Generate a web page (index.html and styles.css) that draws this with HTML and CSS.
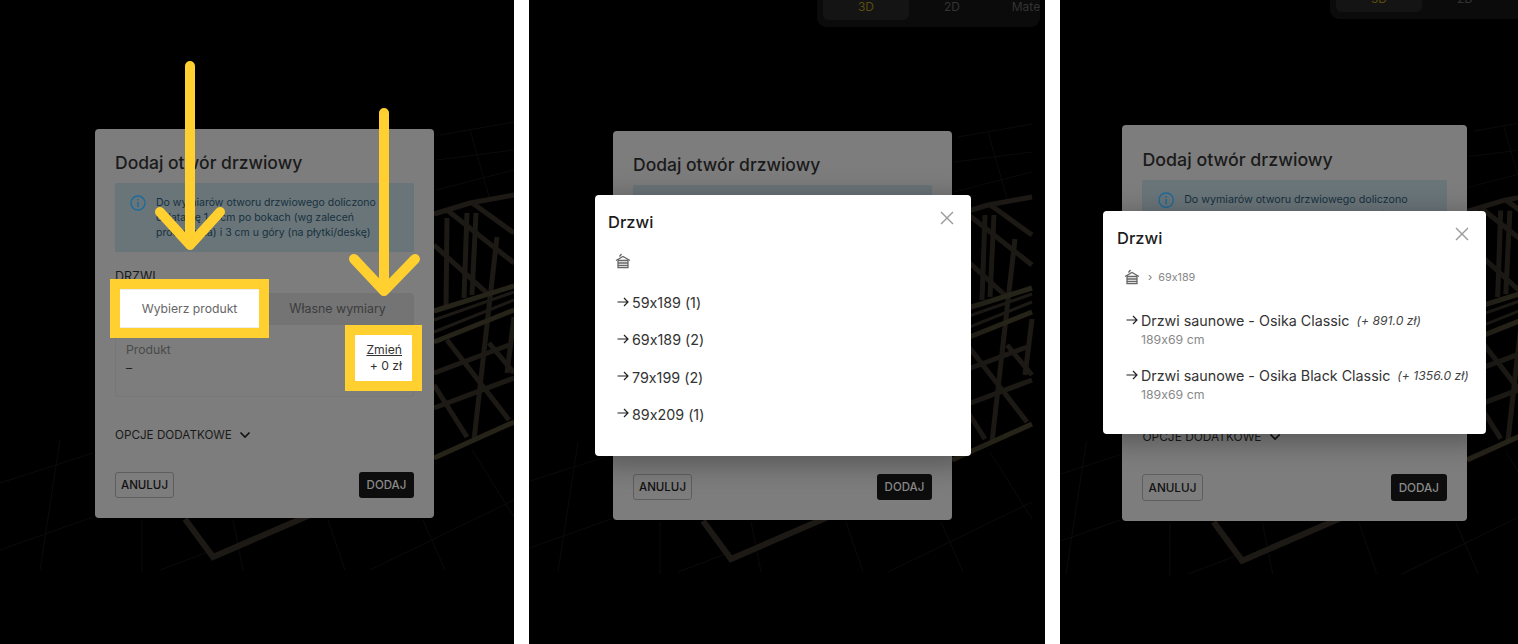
FILE: index.html
```html
<!DOCTYPE html>
<html lang="pl">
<head>
    <meta charset="UTF-8">
    <meta name="viewport" content="width=device-width, initial-scale=1.0">
    <title>Dodaj otwór drzwiowy</title>
    <link rel="stylesheet" href="styles.css">
</head>
<body>

<svg class="defs" width="0" height="0">
    <defs>
        <g id="scene" fill="none">
            <!-- floor grid -->
            <g stroke="#0b0b0b" stroke-width="1">
                <path d="M0 483L93 453M0 550L93 517M60 440L40 570M142 520V572M160 570L213 550M233 520L243 570M328 520L345 570M370 570L514 500M423 520L445 570M472 450L514 517"/>
                <path d="M436 190L514 170M436 160L514 150M440 135L514 122M470 130L490 200"/>
            </g>
            <!-- sauna frame -->
            <g stroke="#1d1a16" stroke-width="5">
                <path d="M434 214L470 203L514 195M447 210L514 263M471 202L514 233M434 245L489 295"/>
                <path d="M447 218L446 307M467 213L464 298M476 213L472 295M497 237L489 307M489 307L474 440M514 317L507 373"/>
                <path d="M434 373L509 345M434 408L514 378M447 340L509 420M434 385L467 437M489 343L514 373"/>
                <path d="M434 320L514 292M434 332L514 300" stroke-width="3"/>
                <path d="M185 519L213 557L310 515" stroke-width="6"/>
            </g>
            <g stroke="#262319" stroke-width="5">
                <path d="M434 311L514 286M434 342L514 310M434 458L514 422"/>
            </g>
        </g>
        <symbol id="home" viewBox="0 0 16 16">
            <path d="M1 7.5L8 3.5L15 7.5M3 7.5V14.5H13V7.5M3 7.5H13M3 10H13M3 12.3H13M4.5 3.5L6.5 1" fill="none" stroke="#666" stroke-width="1.3"/>
        </symbol>
        <symbol id="arrow" viewBox="0 0 12 12">
            <path d="M0.5 6H11M7 2L11 6L7 10" fill="none" stroke="#222" stroke-width="1.2"/>
        </symbol>
        <symbol id="close" viewBox="0 0 14 14">
            <path d="M1 1L13 13M13 1L1 13" fill="none" stroke="#999" stroke-width="1.4"/>
        </symbol>
        <symbol id="info" viewBox="0 0 16 16">
            <circle cx="8" cy="8" r="7" fill="none" stroke="#1c6b9b" stroke-width="1.4"/>
            <path d="M8 7V12M8 4V5.6" fill="none" stroke="#1c6b9b" stroke-width="1.5"/>
        </symbol>
        <symbol id="chevron" viewBox="0 0 12 8">
            <path d="M1.5 1.5L6 6L10.5 1.5" fill="none" stroke="#111" stroke-width="1.6"/>
        </symbol>
    </defs>
</svg>

<div class="screen screen-one">
    <svg class="scene" width="514" height="644"><use href="#scene"/></svg>

    <div class="dialog">
        <h2 class="dialog-title">Dodaj otwór drzwiowy</h2>
        <div class="info-box">
            <svg class="info-icon"><use href="#info"/></svg>
            <p>Do wymiarów otworu drzwiowego doliczono dylatację 1,5 cm po bokach (wg zaleceń producenta) i 3 cm u góry (na płytki/deskę)</p>
        </div>
        <div class="section-label">DRZWI</div>
        <div class="tabs">
            <div class="tab tab-active marked">Wybierz produkt</div>
            <div class="tab">Własne wymiary</div>
        </div>
        <div class="product-box">
            <div>
                <div class="product-label">Produkt</div>
                <div class="product-value">–</div>
            </div>
            <div class="product-price marked">
                <a class="change-link">Zmień</a>
                <div>+ 0 zł</div>
            </div>
        </div>
        <div class="more-options">OPCJE DODATKOWE <svg class="chevron"><use href="#chevron"/></svg></div>
        <div class="dialog-actions">
            <button class="btn btn-outline">ANULUJ</button>
            <button class="btn btn-dark">DODAJ</button>
        </div>
    </div>

    <svg class="arrows" width="514" height="644">
        <path d="M190 66V245M160 212L190 245L220 212"/>
        <path d="M384 113V291M354 259L384 291L415 259"/>
    </svg>
</div>

<div class="screen screen-two">
    <svg class="scene" width="508" height="644"><use href="#scene" transform="translate(-11 2)"/></svg>

    <div class="view-switch">
        <div class="view-tab view-tab-active">3D</div>
        <div class="view-tab">2D</div>
        <div class="view-tab">Materiały</div>
    </div>

    <div class="dialog">
        <h2 class="dialog-title">Dodaj otwór drzwiowy</h2>
        <div class="info-box">
            <svg class="info-icon"><use href="#info"/></svg>
            <p>Do wymiarów otworu drzwiowego doliczono dylatację 1,5 cm po bokach (wg zaleceń producenta) i 3 cm u góry (na płytki/deskę)</p>
        </div>
        <div class="section-label">DRZWI</div>
        <div class="tabs">
            <div class="tab tab-active">Wybierz produkt</div>
            <div class="tab">Własne wymiary</div>
        </div>
        <div class="product-box">
            <div>
                <div class="product-label">Produkt</div>
                <div class="product-value">–</div>
            </div>
            <div class="product-price">
                <a class="change-link">Zmień</a>
                <div>+ 0 zł</div>
            </div>
        </div>
        <div class="more-options">OPCJE DODATKOWE <svg class="chevron"><use href="#chevron"/></svg></div>
        <div class="dialog-actions">
            <button class="btn btn-outline">ANULUJ</button>
            <button class="btn btn-dark">DODAJ</button>
        </div>
    </div>

    <div class="modal">
        <div class="modal-head">
            <h3>Drzwi</h3>
            <svg class="close-icon"><use href="#close"/></svg>
        </div>
        <div class="crumbs">
            <svg class="home-icon"><use href="#home"/></svg>
        </div>
        <div class="pick-list">
            <div class="pick-row"><svg class="arrow-icon"><use href="#arrow"/></svg>59x189 (1)</div>
            <div class="pick-row"><svg class="arrow-icon"><use href="#arrow"/></svg>69x189 (2)</div>
            <div class="pick-row"><svg class="arrow-icon"><use href="#arrow"/></svg>79x199 (2)</div>
            <div class="pick-row"><svg class="arrow-icon"><use href="#arrow"/></svg>89x209 (1)</div>
        </div>
    </div>
</div>

<div class="screen screen-three">
    <svg class="scene" width="458" height="644"><use href="#scene" transform="translate(-34.7 -6.3) scale(1.018)"/></svg>

    <div class="view-switch">
        <div class="view-tab view-tab-active">3D</div>
        <div class="view-tab">2D</div>
        <div class="view-tab">Materiały</div>
    </div>

    <div class="dialog">
        <h2 class="dialog-title">Dodaj otwór drzwiowy</h2>
        <div class="info-box">
            <svg class="info-icon"><use href="#info"/></svg>
            <p>Do wymiarów otworu drzwiowego doliczono dylatację 1,5 cm po bokach (wg zaleceń producenta) i 3 cm u góry (na płytki/deskę)</p>
        </div>
        <div class="section-label">DRZWI</div>
        <div class="tabs">
            <div class="tab tab-active">Wybierz produkt</div>
            <div class="tab">Własne wymiary</div>
        </div>
        <div class="product-box">
            <div>
                <div class="product-label">Produkt</div>
                <div class="product-value">–</div>
            </div>
            <div class="product-price">
                <a class="change-link">Zmień</a>
                <div>+ 0 zł</div>
            </div>
        </div>
        <div class="more-options">OPCJE DODATKOWE <svg class="chevron"><use href="#chevron"/></svg></div>
        <div class="dialog-actions">
            <button class="btn btn-outline">ANULUJ</button>
            <button class="btn btn-dark">DODAJ</button>
        </div>
    </div>

    <div class="modal">
        <div class="modal-head">
            <h3>Drzwi</h3>
            <svg class="close-icon"><use href="#close"/></svg>
        </div>
        <div class="crumbs">
            <svg class="home-icon"><use href="#home"/></svg>
            <span class="crumb-sep">›</span>
            <span class="crumb-text">69x189</span>
        </div>
        <div class="pick-list pick-list-products">
            <div>
                <div class="pick-row"><svg class="arrow-icon"><use href="#arrow"/></svg>Drzwi saunowe - Osika Classic <em>(+ 891.0 zł)</em></div>
                <div class="pick-sub">189x69 cm</div>
            </div>
            <div>
                <div class="pick-row"><svg class="arrow-icon"><use href="#arrow"/></svg>Drzwi saunowe - Osika Black Classic <em>(+ 1356.0 zł)</em></div>
                <div class="pick-sub">189x69 cm</div>
            </div>
        </div>
    </div>
</div>

</body>
</html>
```

FILE: styles.css
```css
* {
    box-sizing: border-box;
}
body {
    font-family: Inter, "Noto Sans", sans-serif;
    font-feature-settings: "calt" 0;
    margin: 0;
    background-color: #fff;
    display: flex;
    gap: 15px;
    height: 644px;
    overflow: hidden;
}
.defs {
    position: absolute;
}
.screen {
    position: relative;
    height: 644px;
    background-color: #000;
    overflow: hidden;
    flex: none;
}
.screen-one {
    width: 514px;
}
.screen-two {
    width: 516px;
}
.screen-three {
    width: 458px;
}
.scene {
    position: absolute;
    left: 0;
    top: 0;
}

/* dimmed dialog */
.dialog {
    position: absolute;
    width: 339px;
    height: 389px;
    padding: 22px 20px 20px;
    background-color: #7d7d7d;
    border-radius: 4px;
    color: #111;
}
.screen-one .dialog {
    left: 95px;
    top: 129px;
}
.screen-two .dialog {
    left: 84px;
    top: 131px;
}
.screen-three .dialog {
    left: 61px;
    top: 123px;
    zoom: 1.018;
}
.dialog-title {
    margin: 0;
    font-size: 17.5px;
    font-weight: 500;
    line-height: 24px;
    color: #1a1a1a;
}
.info-box {
    display: flex;
    gap: 10px;
    height: 69px;
    margin-top: 8px;
    padding: 12px 14px 0 15px;
    background-color: #6a7579;
    border-radius: 2px;
}
.info-box p {
    margin: 0;
    font-size: 10.5px;
    line-height: 15px;
    color: #16303e;
}
.info-icon {
    flex: none;
    width: 16px;
    height: 16px;
}
.section-label {
    margin-top: 17px;
    font-size: 12.5px;
    line-height: 16px;
    color: #1a1a1a;
}
.tabs {
    display: flex;
    height: 32px;
    margin-top: 8px;
    background-color: #747474;
    border-radius: 4px 4px 0 0;
}
.tab {
    flex: 1;
    font-size: 12.4px;
    line-height: 32px;
    text-align: center;
    color: #3c3c3c;
}
.tab:last-child {
    padding-right: 3px;
}
.tab-active {
    background-color: #7d7d7d;
    color: #3c3c3c;
}
.marked {
    position: relative;
    background-color: #fff;
    box-shadow: 0 0 0 10px #ffd02f;
}
.tab.marked {
    flex: none;
    width: 139px;
    margin: -4px 5px -3px;
    font-size: 12.2px;
    line-height: 37px;
    border-top: 1px solid #eee;
    border-bottom: 1px solid #eee;
    color: #666;
}
.product-box {
    display: flex;
    justify-content: space-between;
    height: 72px;
    padding: 17px 11px 0 10px;
    border: 1px solid #777;
    border-top: 0;
    border-radius: 0 0 4px 4px;
    font-size: 12.2px;
    line-height: 16px;
}
.product-label {
    color: #4a4a4a;
}
.product-value {
    margin-top: 2px;
    color: #222;
}
.product-price {
    text-align: right;
    color: #222;
}
.product-price.marked {
    margin: -7px -10px 0 0;
    padding: 7px 10px 7px 11px;
    height: 46px;
    color: #333;
}
.change-link {
    text-decoration: underline;
}
.more-options {
    display: flex;
    align-items: center;
    gap: 7px;
    margin-top: 30px;
    font-size: 11.7px;
    line-height: 16px;
    color: #1a1a1a;
}
.chevron {
    width: 12px;
    height: 8px;
}
.dialog-actions {
    display: flex;
    justify-content: space-between;
    margin-top: 29px;
}
.btn {
    height: 26px;
    padding: 0;
    font-family: inherit;
    font-size: 11.5px;
    font-weight: 500;
    border-radius: 3px;
}
.btn-outline {
    width: 59px;
    background: transparent;
    border: 1px solid #5e5e5e;
    color: #111;
}
.btn-dark {
    width: 55px;
    background-color: #0d0d0d;
    border: 0;
    color: #8a8a8a;
}

/* picker on top */
.modal {
    position: absolute;
    padding: 15px 17px 0 13px;
    background-color: #fff;
    border-radius: 4px;
    box-shadow: 0 6px 30px rgba(0, 0, 0, 0.35);
    color: #222;
}
.screen-two .modal {
    left: 66px;
    top: 195px;
    width: 376px;
    height: 261px;
}
.screen-three .modal {
    left: 43px;
    top: 211px;
    width: 383px;
    height: 223px;
    padding-left: 14px;
}
.modal-head {
    display: flex;
    justify-content: space-between;
    align-items: flex-start;
}
.modal-head h3 {
    margin: 0;
    font-size: 16.5px;
    font-weight: 500;
    line-height: 24px;
    color: #1c1c1c;
}
.close-icon {
    width: 14px;
    height: 14px;
    margin-top: 1px;
}
.crumbs {
    display: flex;
    align-items: center;
    height: 16px;
    margin: 19px 0 0 7px;
}
.home-icon {
    width: 16px;
    height: 16px;
}
.crumb-sep {
    margin-left: 8px;
    font-size: 11px;
    color: #777;
}
.crumb-text {
    margin-left: 6px;
    font-size: 10.8px;
    color: #888;
}
.pick-list {
    display: flex;
    flex-direction: column;
    gap: 17.3px;
    margin: 24px 0 0 9px;
}
.pick-list-products {
    gap: 18px;
    margin-top: 26px;
}
.pick-row {
    display: flex;
    align-items: center;
    gap: 3px;
    font-size: 14.3px;
    line-height: 20px;
    color: #333;
    white-space: pre;
}
.pick-row em {
    font-size: 12.2px;
    color: #444;
}
.arrow-icon {
    flex: none;
    width: 12px;
    height: 12px;
    margin-top: -3px;
}
.pick-sub {
    margin: 1px 0 0 15px;
    font-size: 12.3px;
    line-height: 16px;
    color: #888;
}

/* top switch, cut off by the crop */
.view-switch {
    position: absolute;
    display: flex;
    padding: 0 6px;
    background-color: #0b0b0b;
    border-radius: 0 0 9px 9px;
    overflow: hidden;
    height: 33px;
}
.screen-two .view-switch {
    left: 288px;
    top: -6px;
    width: 223px;
}
.screen-three .view-switch {
    left: 270px;
    top: -14px;
    width: 240px;
}
.view-tab {
    flex: none;
    width: 86px;
    height: 26px;
    font-size: 12px;
    line-height: 26px;
    text-align: center;
    color: #333;
}
.view-tab-active {
    background-color: #141414;
    border-radius: 0 0 6px 6px;
    color: #5a4d0c;
}

/* yellow pointers on the first screen */
.arrows {
    position: absolute;
    left: 0;
    top: 0;
    fill: none;
    stroke: #ffd02f;
    stroke-width: 10;
    stroke-linecap: round;
    stroke-linejoin: round;
}
```
